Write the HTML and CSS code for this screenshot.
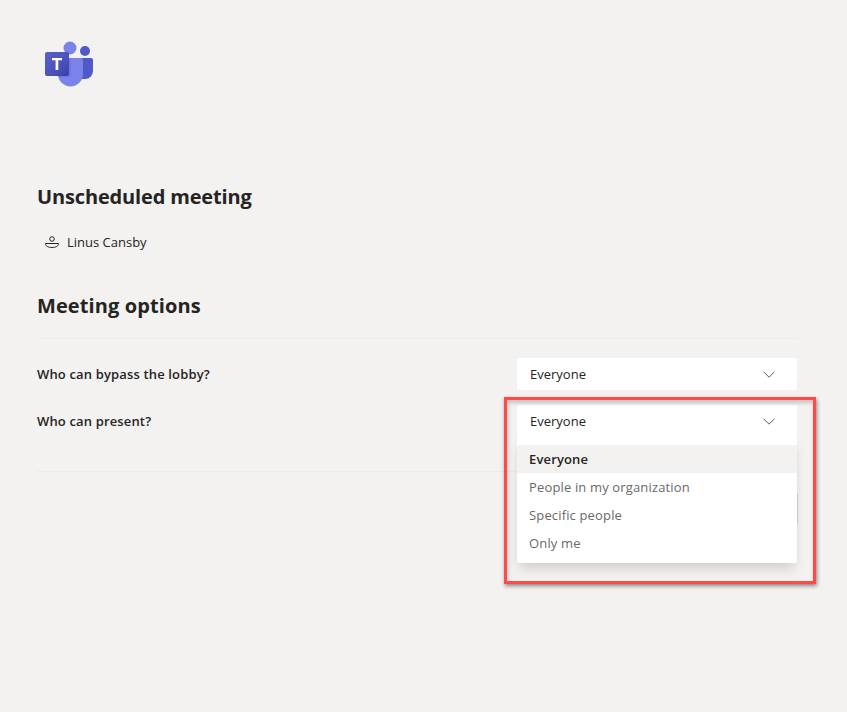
FILE: index.html
```html
<!DOCTYPE html>
<html lang="en">
<head>
<meta charset="utf-8">
<title>Meeting options</title>
<link rel="stylesheet" href="styles.css">
</head>
<body>
<main class="page">
  <svg class="logo" viewBox="0 0 48 46" width="48" height="46" aria-label="Microsoft Teams">
    <defs>
      <linearGradient id="tile" x1="0" y1="0" x2="1" y2="1">
        <stop offset="0" stop-color="#5a62c3"/>
        <stop offset="0.5" stop-color="#4d55bd"/>
        <stop offset="1" stop-color="#3940ab"/>
      </linearGradient>
    </defs>
    <circle cx="40" cy="10" r="5" fill="#5059c9"/>
    <path d="M33 17h13a2 2 0 0 1 2 2v11a8 8 0 0 1-8 8h-7z" fill="#5059c9"/>
    <circle cx="25" cy="7" r="6.5" fill="#7b83eb"/>
    <path d="M13 17h23a2 2 0 0 1 2 2v14a12.500 12.500 0 0 1-25 0z" fill="#7b83eb"/>
    <path d="M13 36h11a2 2 0 0 0 2-2V17H13z" fill="#4f56b8" opacity=".25"/>
    <rect x="0" y="11" width="24" height="24" rx="2" fill="url(#tile)"/>
    <path d="M7 17h10v2.300h-3.700V29h-2.700v-9.700H7z" fill="#fff"/>
  </svg>

  <h1 class="title">Unscheduled meeting</h1>
  <div class="organizer">
    <svg class="person" viewBox="0 0 14 12" width="14" height="12">
      <circle cx="7" cy="3" r="2.3" fill="none" stroke="#252423"/>
      <path d="M.5 7.500h13c0 2.500-2.500 4-6.500 4S.5 10 .5 7.500z" fill="none" stroke="#252423"/>
    </svg>
    <span>Linus Cansby</span>
  </div>

  <h2 class="heading">Meeting options</h2>

  <section class="options">
    <div class="row">
      <span class="label">Who can bypass the lobby?</span>
      <div class="select">
        <span>Everyone</span>
        <svg class="chevron" viewBox="0 0 12 7" width="12" height="7"><path d="M.5.700 6 6.200 11.500.700" fill="none" stroke="#605e5c"/></svg>
      </div>
    </div>
    <div class="row row-open">
      <span class="label">Who can present?</span>
      <div class="select-wrap">
        <div class="select">
          <span>Everyone</span>
          <svg class="chevron" viewBox="0 0 12 7" width="12" height="7"><path d="M.5.700 6 6.200 11.500.700" fill="none" stroke="#605e5c"/></svg>
        </div>
        <ul class="menu">
          <li class="item item-selected">Everyone</li>
          <li class="item">People in my organization</li>
          <li class="item">Specific people</li>
          <li class="item">Only me</li>
        </ul>
        <div class="callout"></div>
      </div>
    </div>
  </section>

  <div class="actions"><div class="save"></div></div>
</main>
</body>
</html>
```
FILE: styles.css
```css
* { box-sizing: border-box; }
html, body { margin: 0; height: 100%; }
body {
  background: #f3f2f1;
  color: #252423;
  font-family: "Open Sans", "Noto Sans", sans-serif;
  overflow: hidden;
}
.page {
  width: 760px;
  margin-left: 37px;
  padding-top: 41px;
  display: flex;
  flex-direction: column;
}
.logo { display: block; margin-left: 8px; }
.title {
  margin: 96px 0 0;
  font-size: 20px;
  line-height: 28px;
  font-weight: 700;
  letter-spacing: -0.15px;
}
.organizer {
  margin-top: 21px;
  margin-left: 8px;
  display: flex;
  align-items: center;
  gap: 8px;
  font-size: 13px;
  line-height: 20px;
}
.person { display: block; }
.heading {
  margin: 40px 0 0;
  font-size: 20px;
  line-height: 28px;
  font-weight: 700;
  letter-spacing: 0.1px;
  padding-bottom: 18px;
  border-bottom: 1px solid #edebe9;
}
.options {
  padding-top: 19px;
  height: 133px;
  border-bottom: 1px solid #edebe9;
  display: flex;
  flex-direction: column;
  gap: 15px;
}
.row {
  display: flex;
  justify-content: space-between;
  align-items: flex-start;
}
.label {
  font-size: 13px;
  line-height: 32px;
  font-weight: 600;
  letter-spacing: 0.15px;
}
.select, .select-wrap { width: 280px; }
.select {
  height: 32px;
  padding: 0 22px 0 13px;
  background: #fff;
  border-radius: 2px;
  display: flex;
  align-items: center;
  justify-content: space-between;
  font-size: 13px;
}
.chevron { display: block; }
.select-wrap { position: relative; }
.menu {
  position: absolute;
  top: 32px;
  left: 0;
  width: 280px;
  margin: 0;
  padding: 8px 0 6px;
  list-style: none;
  background: #fff;
  border-radius: 0 0 2px 2px;
  box-shadow: 0 8px 12px -3px rgba(0, 0, 0, .16);
  z-index: 2;
}
.item {
  height: 28px;
  padding-left: 12px;
  font-size: 13px;
  line-height: 28px;
  letter-spacing: 0.15px;
  color: #6b6967;
}
.item-selected {
  background: #f3f2f1;
  color: #252423;
  font-weight: 600;
}
.callout {
  position: absolute;
  top: -8px;
  left: -13px;
  width: 312px;
  height: 187px;
  border: 3px solid #ff4a4a;
  box-shadow: 1px 2px 4px rgba(0, 0, 0, .45), inset 1px 3px 4px rgba(0, 0, 0, .2);
  z-index: 3;
}
.actions {
  display: flex;
  justify-content: flex-end;
  padding-top: 21px;
}
.save {
  width: 96px;
  height: 32px;
  background: #e1dfdd;
  border-radius: 2px;
  box-shadow: 1px 0 0 #d6d4d2;
}
```
